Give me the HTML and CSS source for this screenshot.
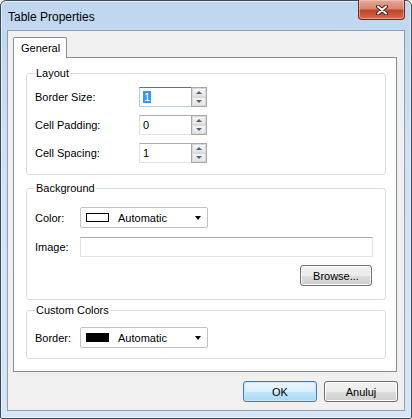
FILE: index.html
```html
<!DOCTYPE html>
<html lang="pl">
<head>
    <meta charset="UTF-8">
    <title>Table Properties</title>
    <link rel="stylesheet" href="styles.css">
</head>
<body>

<div class="window">
    <div class="titlebar">
        <span class="title">Table Properties</span>
        <div class="close">
            <svg width="12" height="10" viewBox="0 0 12 10">
                <path d="M2 1.5 L10 8.5 M10 1.5 L2 8.5" stroke="#4a1a14" stroke-width="4" stroke-linecap="round"/>
                <path d="M2 1.5 L10 8.5 M10 1.5 L2 8.5" stroke="#fff" stroke-width="2" stroke-linecap="round"/>
            </svg>
        </div>
    </div>

    <div class="client">
        <div class="tabs">
            <div class="tab">General</div>
        </div>

        <div class="panel">
            <fieldset class="group group-layout">
                <legend>Layout</legend>
                <div class="row">
                    <label class="label label-wide">Border Size:</label>
                    <div class="spin">
                        <div class="spin-input focused"><span class="selected">1</span></div>
                        <div class="spin-btns">
                            <div class="spin-btn"><span class="tri-up"></span></div>
                            <div class="spin-btn"><span class="tri-down"></span></div>
                        </div>
                    </div>
                </div>
                <div class="row">
                    <label class="label label-wide">Cell Padding:</label>
                    <div class="spin">
                        <div class="spin-input">0</div>
                        <div class="spin-btns">
                            <div class="spin-btn"><span class="tri-up"></span></div>
                            <div class="spin-btn"><span class="tri-down"></span></div>
                        </div>
                    </div>
                </div>
                <div class="row">
                    <label class="label label-wide">Cell Spacing:</label>
                    <div class="spin">
                        <div class="spin-input">1</div>
                        <div class="spin-btns">
                            <div class="spin-btn"><span class="tri-up"></span></div>
                            <div class="spin-btn"><span class="tri-down"></span></div>
                        </div>
                    </div>
                </div>
            </fieldset>

            <fieldset class="group group-bg">
                <legend>Background</legend>
                <div class="row">
                    <label class="label">Color:</label>
                    <div class="combo">
                        <span class="swatch"></span>
                        <span class="combo-text">Automatic</span>
                        <span class="combo-arrow"></span>
                    </div>
                </div>
                <div class="row">
                    <label class="label">Image:</label>
                    <div class="textbox"></div>
                </div>
                <div class="row row-end">
                    <button class="btn btn-browse">Browse...</button>
                </div>
            </fieldset>

            <fieldset class="group group-custom">
                <legend>Custom Colors</legend>
                <div class="row">
                    <label class="label">Border:</label>
                    <div class="combo">
                        <span class="swatch swatch-black"></span>
                        <span class="combo-text">Automatic</span>
                        <span class="combo-arrow"></span>
                    </div>
                </div>
            </fieldset>
        </div>

        <div class="buttons">
            <button class="btn btn-default">OK</button>
            <button class="btn">Anuluj</button>
        </div>
    </div>
</div>

</body>
</html>
```

FILE: styles.css
```css
body {
    margin: 0;
    background: #fff;
    font-family: "Liberation Sans", Arial, sans-serif;
    font-size: 11px;
    color: #000;
}
.window {
    width: 412px;
    height: 419px;
    box-sizing: border-box;
    border: 1px solid #3e4a58;
    border-radius: 6px 6px 2px 2px;
    background: linear-gradient(to bottom, #bfd6ef 0%, #d0e2f5 40%, #d6e6f6 100%);
    padding: 0 6px 7px 6px;
    display: flex;
    flex-direction: column;
    box-shadow: inset 0 0 0 1px #e6f0fb;
}
.titlebar {
    height: 29px;
    display: flex;
    align-items: flex-start;
    justify-content: space-between;
    flex-shrink: 0;
}
.title {
    font-size: 12px;
    margin: 9px 0 0 1px;
    color: #000;
}
.close {
    width: 47px;
    height: 20px;
    margin-top: -1px;
    box-sizing: border-box;
    border: 1px solid #6b2b22;
    border-top: none;
    border-radius: 0 0 4px 4px;
    background: linear-gradient(to bottom, #e6a89b 0%, #d8846f 45%, #c0442c 55%, #d26a4f 100%);
    box-shadow: inset 0 0 0 1px rgba(255, 210, 200, 0.5);
    display: flex;
    align-items: center;
    justify-content: center;
}
.client {
    flex: 1;
    background: #f0f0f0;
    border: 1px solid #8e9fb3;
    display: flex;
    flex-direction: column;
}
.tabs {
    display: flex;
    padding: 6px 0 0 5px;
}
.tab {
    height: 21px;
    box-sizing: border-box;
    width: 54px;
    padding: 4px 0 0 7px;
    margin-bottom: -1px;
    background: #fff;
    border: 1px solid #898c95;
    border-bottom: none;
    border-radius: 2px 2px 0 0;
    position: relative;
    z-index: 1;
}
.panel {
    margin: 0 7px 0 5px;
    height: 315px;
    box-sizing: border-box;
    background: #fff;
    border: 1px solid #898c95;
    padding: 0 10px 0 12px;
}
.group {
    margin: 0;
    min-width: 0;
    border: 1px solid #d5dfe5;
    border-radius: 3px;
    padding: 0 12px 0 8px;
}
.group legend {
    padding: 0 1px;
    line-height: 15px;
    color: #000;
}
.group-layout {
    margin-top: 8px;
    padding-top: 6px;
    padding-bottom: 11px;
}
.group-bg {
    margin-top: 6px;
    padding-top: 11px;
    padding-bottom: 13px;
}
.group-custom {
    margin-top: 3px;
    padding-top: 9px;
    padding-bottom: 10px;
}
.row {
    display: flex;
    align-items: center;
    margin-bottom: 8px;
}
.row:last-child {
    margin-bottom: 0;
}
.group-bg .row:first-of-type {
    margin-bottom: 9px;
}
.row-end {
    justify-content: flex-end;
}
.label {
    width: 45px;
    flex-shrink: 0;
}
.label-wide {
    width: 104px;
}
.spin {
    display: flex;
    height: 20px;
}
.spin-input {
    width: 52px;
    height: 20px;
    box-sizing: border-box;
    border: 1px solid #e2e3ea;
    border-top-color: #abadb3;
    border-left-color: #dbdfe6;
    border-right: none;
    padding: 3px 0 0 3px;
    background: #fff;
}
.spin-input.focused {
    border-color: #b5cfe7;
    border-top-color: #3d7bad;
}
.selected {
    background: #3399ff;
    color: #fff;
    padding: 0 1px;
}
.spin-btns {
    width: 16px;
    height: 20px;
    box-sizing: border-box;
    border: 1px solid #a7a7a7;
    display: flex;
    flex-direction: column;
    background: #fff;
}
.spin-btn {
    flex: 1;
    border: 1px solid #dadada;
    background: linear-gradient(to bottom, #f6f6f6, #e3e3e3);
    display: flex;
    align-items: center;
    justify-content: center;
}
.tri-up {
    width: 0;
    height: 0;
    border-left: 3px solid transparent;
    border-right: 3px solid transparent;
    border-bottom: 3px solid #4c607f;
}
.tri-down {
    width: 0;
    height: 0;
    border-left: 3px solid transparent;
    border-right: 3px solid transparent;
    border-top: 3px solid #4c607f;
}
.combo {
    width: 128px;
    height: 21px;
    box-sizing: border-box;
    border: 1px solid #c2c2c2;
    border-radius: 2px;
    background: #fff;
    display: flex;
    align-items: center;
    padding: 0 5px 0 5px;
}
.swatch {
    width: 23px;
    height: 9px;
    box-sizing: border-box;
    border: 1px solid #000;
    background: #fff;
    flex-shrink: 0;
}
.swatch-black {
    background: #000;
}
.combo-text {
    margin-left: 9px;
    flex: 1;
}
.combo-arrow {
    width: 0;
    height: 0;
    border-left: 3.5px solid transparent;
    border-right: 3.5px solid transparent;
    border-top: 4px solid #000;
    margin-right: 1px;
}
.textbox {
    flex: 1;
    height: 20px;
    box-sizing: border-box;
    border: 1px solid #e2e3ea;
    border-top-color: #abadb3;
    background: #fff;
}
.btn {
    font-family: "Liberation Sans", Arial, sans-serif;
    font-size: 11px;
    color: #000;
    width: 74px;
    height: 21px;
    box-sizing: border-box;
    border: 1px solid #707070;
    border-radius: 3px;
    background: linear-gradient(to bottom, #f2f2f2 0%, #ebebeb 50%, #dddddd 51%, #cfcfcf 100%);
    box-shadow: inset 0 0 0 1px #fcfcfc;
    padding: 0;
}
.btn-browse {
    width: 72px;
    margin-right: 1px;
}
.btn-default {
    border-color: #3c7fb1;
    background: linear-gradient(to bottom, #eaf6fd 0%, #d9f0fc 50%, #bee6fd 51%, #a7d9f5 100%);
    box-shadow: inset 0 0 0 1px #c9e6f8;
}
.buttons {
    display: flex;
    justify-content: flex-end;
    gap: 7px;
    margin-top: 9px;
    padding-right: 6px;
}
```
